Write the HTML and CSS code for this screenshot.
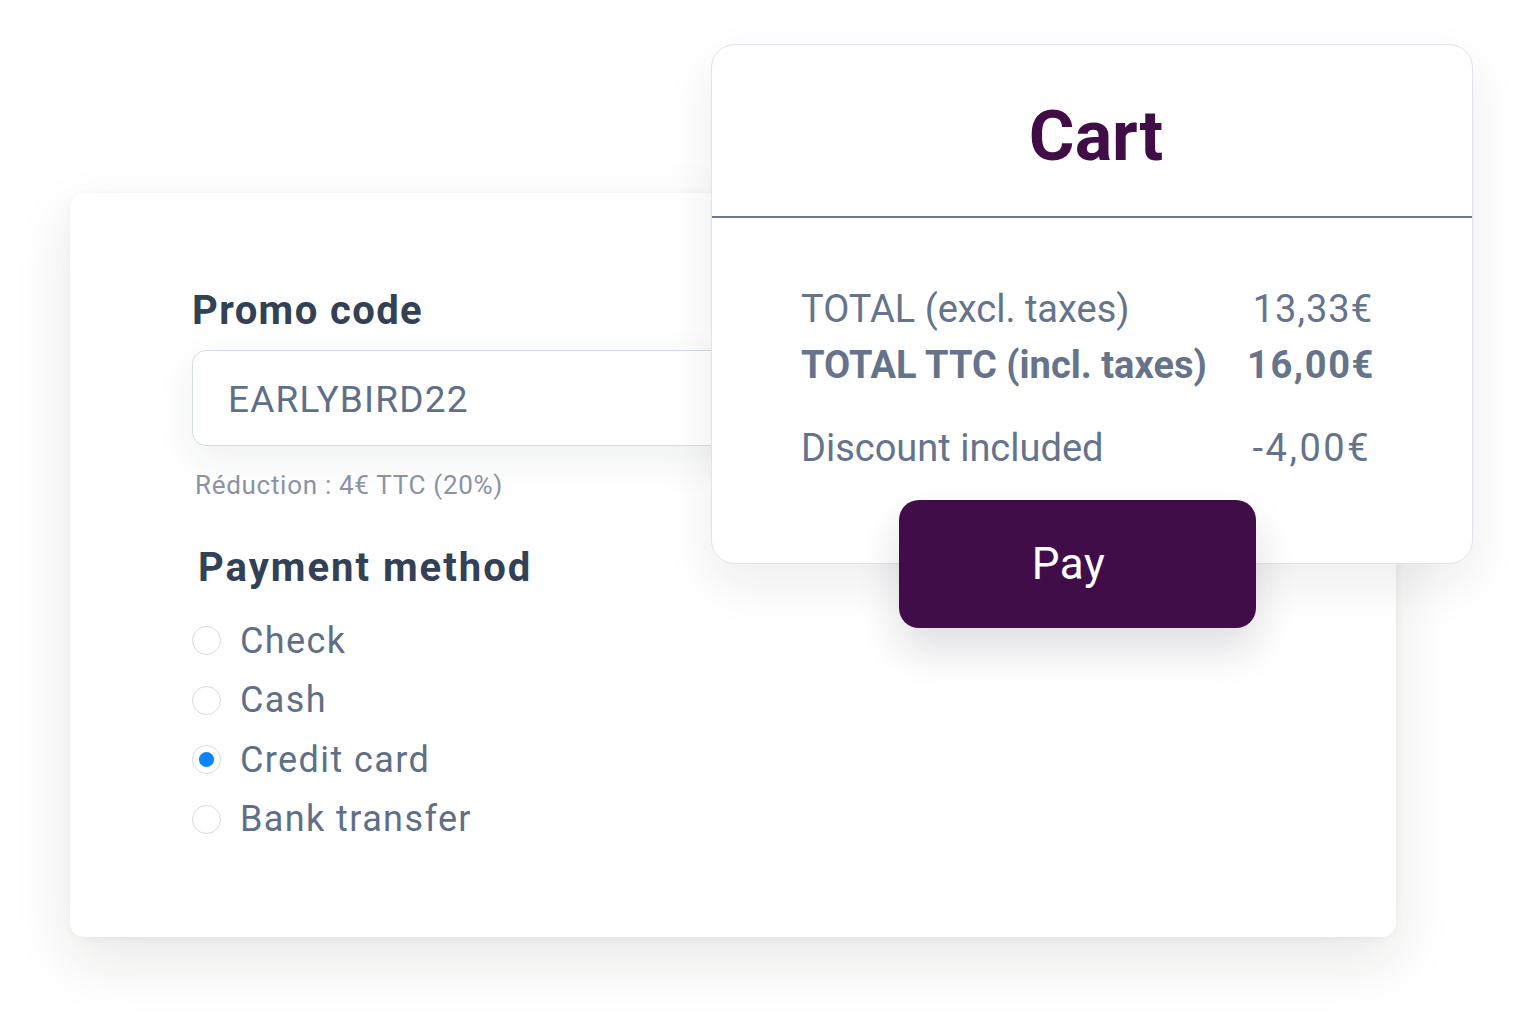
FILE: index.html
```html
<!DOCTYPE html>
<html lang="en">
<head>
<meta charset="utf-8">
<title>Checkout</title>
<link rel="stylesheet" href="styles.css">
</head>
<body>
<div class="stage">
  <section class="form-card">
    <h2 class="heading">Promo code</h2>
    <div class="input">EARLYBIRD22</div>
    <p class="hint">Réduction : 4€ TTC (20%)</p>
    <h2 class="heading heading-pay">Payment method</h2>
    <ul class="radios">
      <li class="radio-row"><span class="radio"></span><span class="radio-label">Check</span></li>
      <li class="radio-row"><span class="radio"></span><span class="radio-label">Cash</span></li>
      <li class="radio-row"><span class="radio radio-on"></span><span class="radio-label">Credit card</span></li>
      <li class="radio-row"><span class="radio"></span><span class="radio-label">Bank transfer</span></li>
    </ul>
  </section>

  <section class="cart">
    <header class="cart-head"><h1 class="cart-title">Cart</h1></header>
    <div class="cart-body">
      <div class="row row-1"><span>TOTAL (excl. taxes)</span><span class="val">13,33€</span></div>
      <div class="row row-2 row-bold"><span>TOTAL TTC (incl. taxes)</span><span class="val val-bold">16,00€</span></div>
      <div class="row row-3"><span>Discount included</span><span class="val val-neg">-4,00€</span></div>
      <button class="pay">Pay</button>
    </div>
  </section>
</div>
</body>
</html>
```

FILE: styles.css
```css
* { box-sizing: border-box; }
html, body { margin: 0; padding: 0; }
body {
  width: 1529px;
  height: 1025px;
  background: #ffffff;
  font-family: Roboto, "Liberation Sans", sans-serif;
  overflow: hidden;
}
.stage {
  position: relative;
  width: 1529px;
  height: 1025px;
  padding-top: 193px;
  padding-left: 70px;
}

/* Main form card */
.form-card {
  width: 1326px;
  height: 744px;
  background: #ffffff;
  border-radius: 14px;
  box-shadow: 0 24px 60px rgba(40, 30, 20, 0.10), 0 2px 10px rgba(0, 0, 0, 0.04);
  padding: 95px 0 0 122px;
}
.heading {
  margin: 0;
  font-size: 40px;
  line-height: 46px;
  font-weight: 700;
  color: #334155;
  letter-spacing: 1.4px;
}
.input {
  margin-top: 16px;
  width: 600px;
  height: 96px;
  border: 1.5px solid #d6dce4;
  border-radius: 14px;
  padding-left: 35px;
  padding-top: 3px;
  display: flex;
  align-items: center;
  font-size: 37px;
  letter-spacing: 1.2px;
  color: #5f6f88;
  background: #fff;
  box-shadow: 0 14px 40px rgba(30, 40, 60, 0.07);
}
.hint {
  margin: 24px 0 0 3px;
  font-size: 26px;
  line-height: 30px;
  letter-spacing: 0.7px;
  color: #8993a5;
}
.heading-pay {
  margin-top: 45px;
  margin-left: 6px;
  letter-spacing: 2px;
}
.radios {
  list-style: none;
  margin: 20px 0 0 0;
  padding: 0;
}
.radio-row {
  display: flex;
  align-items: center;
  height: 59.5px;
}
.radio {
  width: 29px;
  height: 29px;
  border-radius: 50%;
  border: 1.5px solid #d5dbe3;
  background: #fff;
  margin-right: 19px;
  display: flex;
  align-items: center;
  justify-content: center;
  flex: none;
}
.radio-on::after {
  content: "";
  width: 15px;
  height: 15px;
  border-radius: 50%;
  background: #0a84ff;
}
.radio-label {
  font-size: 36px;
  color: #5f6f88;
  letter-spacing: 1.4px;
}

/* Cart card overlapping */
.cart {
  position: absolute;
  left: 711px;
  top: 44px;
  width: 762px;
  height: 520px;
  background: #ffffff;
  border: 1.5px solid #e0e4ea;
  border-radius: 24px;
  box-shadow: 0 20px 50px rgba(30, 30, 40, 0.08);
}
.cart-head {
  height: 173px;
  border-bottom: 2.5px solid #6b7a90;
  display: flex;
  align-items: center;
  justify-content: center;
  padding-left: 8px;
}
.cart-title {
  margin: 0;
  font-size: 70px;
  font-weight: 700;
  color: #410d47;
  line-height: 1;
  padding-top: 10px;
}
.cart-body {
  padding: 68px 99px 0 89px;
}
.row {
  display: flex;
  justify-content: space-between;
  font-size: 38px;
  line-height: 46px;
  color: #65748b;
}
.row-2 { margin-top: 10px; }
.row-3 { margin-top: 37px; }
.row-bold { font-weight: 700; }
.val { letter-spacing: 1px; }
.val-bold { letter-spacing: 1.6px; margin-right: -2px; }
.val-neg { letter-spacing: 2.5px; margin-right: 2px; }
.pay {
  display: block;
  margin: 29px 0 0 98px;
  width: 357px;
  height: 128px;
  border: none;
  border-radius: 20px;
  background: #410d48;
  color: #ffffff;
  font-family: Roboto, "Liberation Sans", sans-serif;
  font-size: 44px;
  font-weight: 400;
  letter-spacing: 0.5px;
  padding: 0 18px 0 0;
  box-shadow: 0 22px 40px rgba(30, 20, 40, 0.14);
}
```
